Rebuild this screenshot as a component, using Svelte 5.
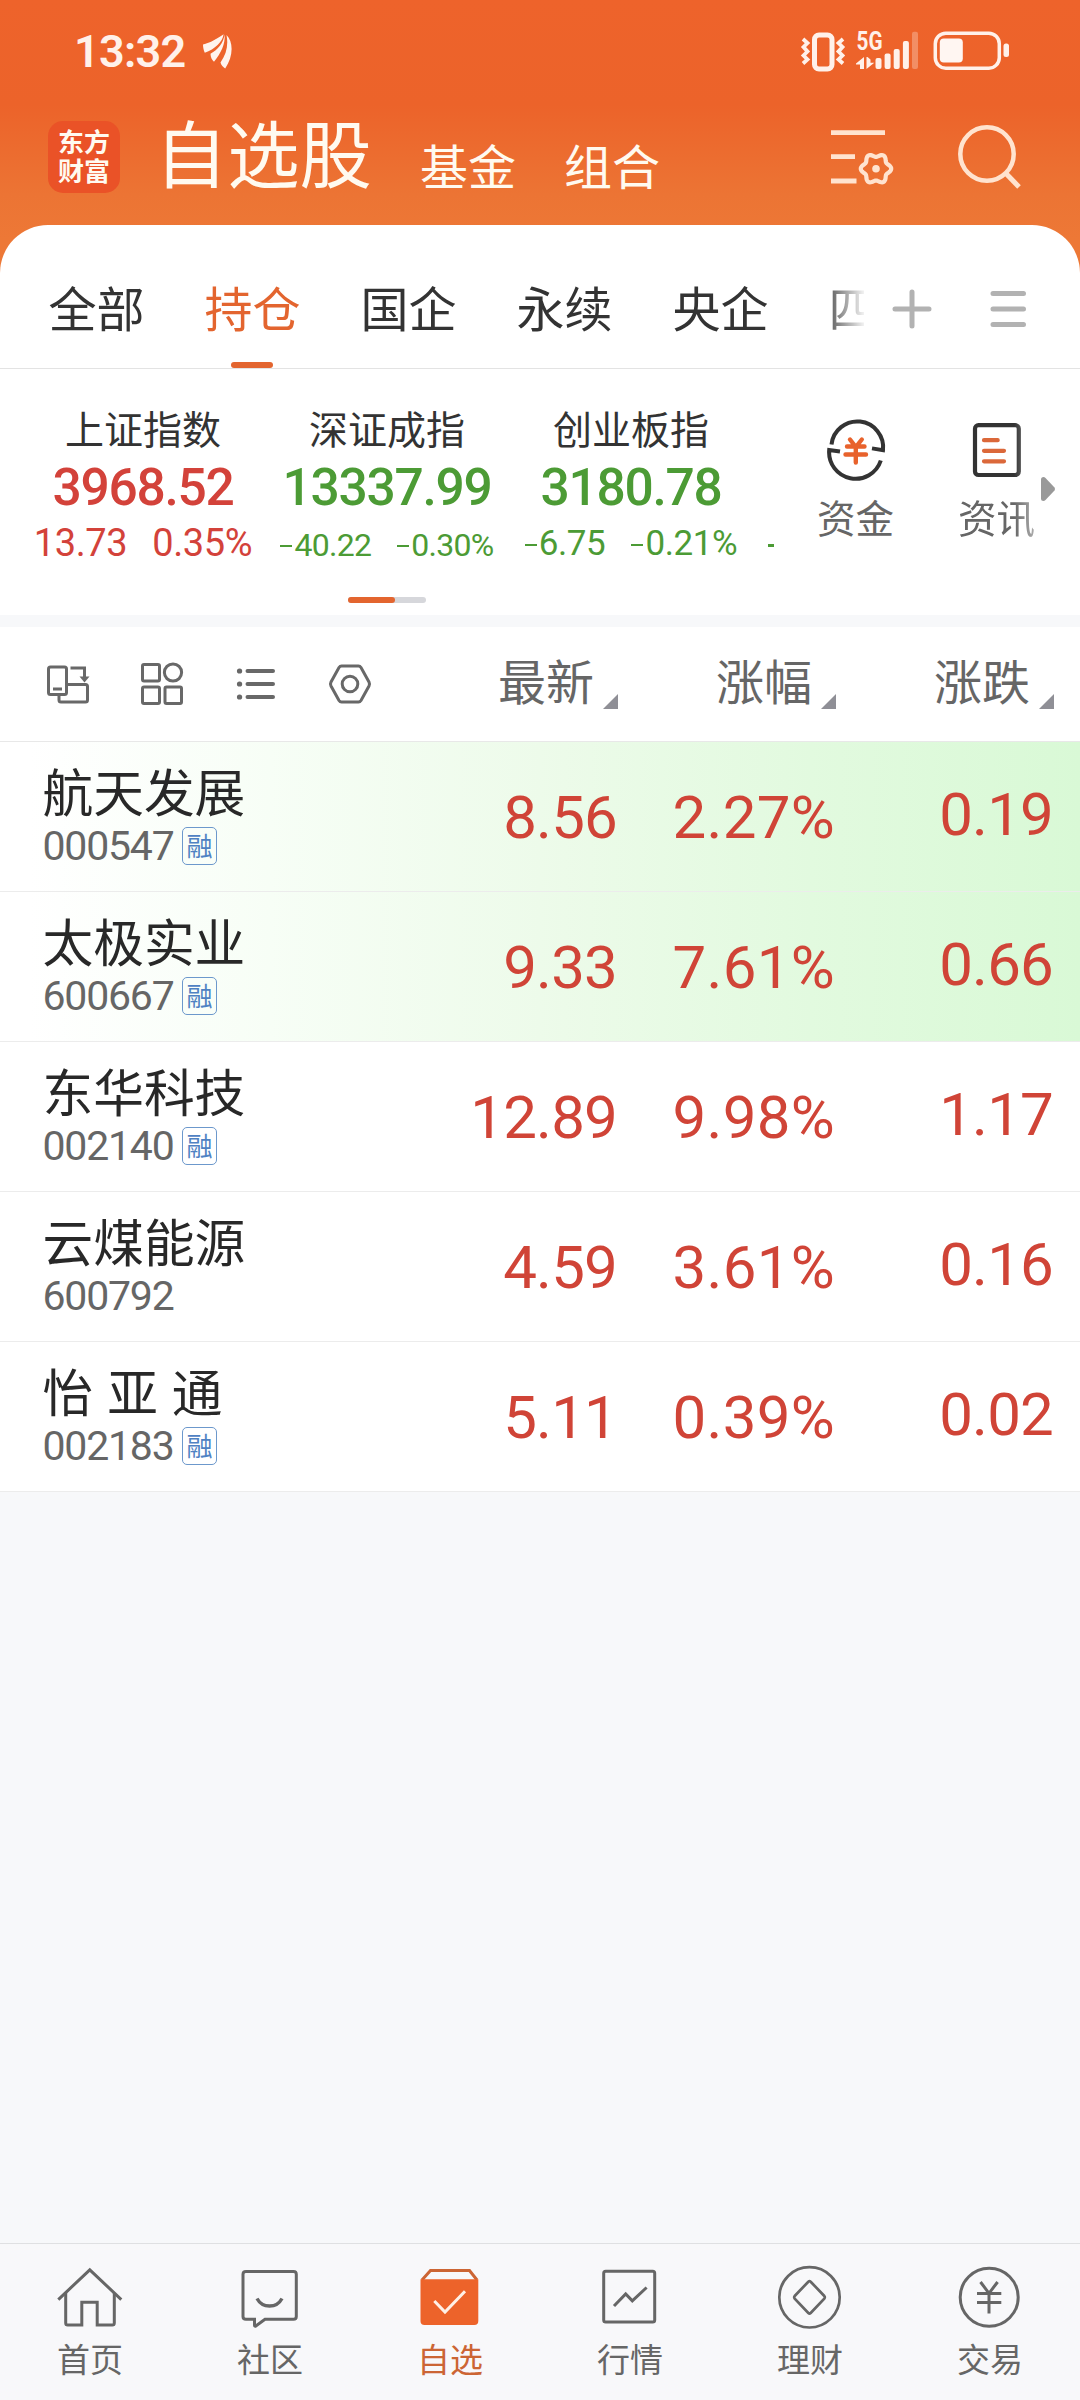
<script lang="ts">
  const tabs = ['全部', '持仓', '国企', '永续', '央企', '四'];

  const indices = [
    { name: '上证指数', value: '3968.52', diff: '13.73', pct: '0.35%', dir: 'up', size: 'l' },
    { name: '深证成指', value: '13337.99', diff: '-40.22', pct: '-0.30%', dir: 'down', size: 's' },
    { name: '创业板指', value: '3180.78', diff: '-6.75', pct: '-0.21%', dir: 'down', size: 'm' },
  ];

  const columns = ['最新', '涨幅', '涨跌'];

  const stocks = [
    { name: '航天发展', code: '000547', margin: true, price: '8.56', pct: '2.27%', diff: '0.19', tint: true },
    { name: '太极实业', code: '600667', margin: true, price: '9.33', pct: '7.61%', diff: '0.66', tint: true },
    { name: '东华科技', code: '002140', margin: true, price: '12.89', pct: '9.98%', diff: '1.17', tint: false },
    { name: '云煤能源', code: '600792', margin: false, price: '4.59', pct: '3.61%', diff: '0.16', tint: false },
    { name: '怡 亚 通', code: '002183', margin: true, price: '5.11', pct: '0.39%', diff: '0.02', tint: false },
  ];

  const nav = ['首页', '社区', '自选', '行情', '理财', '交易'];

  // Six-lobed outline of the settings gear
  const gear = Array.from({ length: 120 }, (_, k) => {
    const a = (k / 120) * Math.PI * 2;
    const r = 13.5 + 1.7 * Math.cos(6 * a);
    return `${(876 + r * Math.cos(a)).toFixed(2)},${(168.7 + r * Math.sin(a)).toFixed(2)}`;
  }).join(' ');
</script>

{#snippet signed(text: string)}
  {#if text.startsWith('-')}<i class="minus"></i>{text.slice(1)}{:else}{text}{/if}
{/snippet}

<div class="screen">
  <header class="top">
    <div class="status">
      <span class="time">13:32</span>
      <svg class="leaf" width="32" height="36" viewBox="0 0 32 36" fill="#fff4ee">
        <path d="M2 11.500C9 10 17 5 22.600 1.200C21.500 9 14 16 3.800 19.800C2.500 17 2 14 2 11.500Z" />
        <path d="M23.600 1.500C24.500 11 20 20 13 28.800C11 27 9.500 24.500 9.500 20.800C17 16.500 22.500 10 23.600 1.500Z" />
        <path d="M25.500 2C32.500 9 32.500 23 24.200 35.500C22 34 20.300 32.500 19.500 29.500C25.500 21 27.500 12 25.500 2Z" />
      </svg>
      <svg class="signals" width="212" height="44" viewBox="800 29 212 44" fill="none">
        <g stroke="#fff1ea">
          <rect x="814.500" y="35" width="17.500" height="34" rx="4.500" stroke-width="5" />
          <path d="M803 39l4.500 4-4 4 4 4.500-4 4 4 4-4.500 4M843 39l-4.500 4 4 4-4 4.500 4 4-4 4 4.500 4" stroke-width="3.800" />
        </g>
        <text x="856.500" y="50.300" textLength="26" lengthAdjust="spacingAndGlyphs" class="net">5G</text>
        <g fill="#fff1ea">
          <path d="M856 63.500L864 57V69H860V64.500H856ZM874.300 62.800L866.500 69V57H867.500L870.500 59.500V62.800Z" />
          <rect x="875.500" y="58" width="6" height="11" rx="2" />
          <rect x="884.600" y="53.600" width="6" height="15.400" rx="2" />
          <rect x="893.700" y="49" width="6" height="20" rx="2" />
          <rect x="902.900" y="41" width="6" height="28" rx="2" />
          <rect x="912" y="31.700" width="6" height="37.300" rx="2" opacity=".3" />
          <rect x="939.800" y="38.500" width="23" height="24" rx="4" fill="#fff6f2" />
          <rect x="1003.500" y="43.500" width="5.500" height="13.500" rx="2.500" />
        </g>
        <rect x="935.300" y="33.200" width="64" height="35" rx="10.500" stroke="#fff1ea" stroke-width="3.500" />
      </svg>
    </div>

    <div class="titlebar">
      <div class="logo"><span>东方</span><span>财富</span></div>
      <h1>自选股</h1>
      <span class="sub">基金</span>
      <span class="sub">组合</span>
      <svg class="actions" width="196" height="64" viewBox="828 122 196 64" fill="none" stroke="#ffe3cf" stroke-width="4.800">
        <path d="M831 132.700H885M831 156.700H855M831 181H856.500" />
        <polygon points={gear} stroke-width="4.200" />
        <circle cx="876" cy="168.700" r="3.800" fill="#ffe3cf" stroke="none" />
        <circle cx="987" cy="154" r="26.700" stroke-width="4.500" />
        <path d="M1005 172.500L1019 187" stroke-width="5" />
      </svg>
    </div>
  </header>

  <section class="sheet">
    <nav class="tabs">
      <div class="tablist">
        {#each tabs as tab, i}
          <span class="tab" class:active={i === 1}>{tab}</span>
        {/each}
      </div>
      <svg width="140" height="44" viewBox="890 286.500 140 44" fill="none" stroke="#b2b2b2" stroke-width="5" stroke-linecap="round">
        <path d="M895 308.500H929M912 291.500V325.500M993 293H1023.500M993 308.500H1023.500M993 324H1023.500" />
      </svg>
    </nav>

    <div class="market">
      <div class="indices">
        {#each indices as idx}
          <div class="index {idx.dir}">
            <span class="iname">{idx.name}</span>
            <span class="ivalue">{idx.value}</span>
            <span class="ichange {idx.size}">
              <span>{@render signed(idx.diff)}</span>
              <span>{@render signed(idx.pct)}</span>
            </span>
          </div>
        {/each}
        <i class="peek"></i>
      </div>
      <div class="shortcuts">
        <div class="shortcut">
          <svg width="64" height="64" viewBox="824 418 64 64" fill="none" stroke="#333" stroke-width="4">
            <path d="M831.500 444.500A25.500 25.500 0 0 1 883 450.200L872 448.400" />
            <path d="M880.800 460.500A26.500 26.500 0 0 1 829.200 450L840 451.600" />
            <path d="M850 439.500L855.800 447L861.800 439.500M847 446.500H864.500M845.500 454.500H866M855.800 446V462.500" stroke="#e8622c" stroke-linecap="round" stroke-width="4.400" />
          </svg>
          <span>资金</span>
        </div>
        <div class="shortcut fade">
          <svg width="64" height="64" viewBox="965 418 64 64" fill="none" stroke="#333" stroke-width="4.200">
            <rect x="975" y="425.200" width="43.800" height="49.800" rx="3.500" />
            <path d="M984 440.200H997.700M984 450.800H1004M984 461.300H1004" stroke="#db683a" stroke-linecap="round" />
          </svg>
          <span>资讯</span>
        </div>
        <svg class="more" width="16" height="26" viewBox="0 0 16 26">
          <path d="M1 3.500Q1 1 3.500 1Q4.500 1 5.500 2L14.500 11.500Q15.500 13 14.500 14.500L5.500 24Q4.500 25 3.500 25Q1 25 1 22.500Z" fill="#999" />
        </svg>
      </div>
      <div class="pager"><i></i></div>
    </div>
  </section>

  <section class="board">
    <div class="thead">
      <svg class="tools" width="330" height="46" viewBox="44 661 330 46" fill="none" stroke="#686868" stroke-width="3">
        <rect x="48.500" y="667" width="18" height="27.500" rx="2" />
        <path d="M53 689H62M59 695V700Q59 702 61 702H85.500Q87.500 702 87.500 700V686.500Q87.500 684.500 85.500 684.500H67M70.500 668H84.500V678" />
        <path d="M79.500 676.500H89.500L84.500 682.500Z" fill="#686868" stroke="none" />
        <rect x="142.500" y="664.500" width="17" height="16.500" rx="1.500" />
        <circle cx="173" cy="672.500" r="8.600" />
        <rect x="142.500" y="687" width="17" height="16.500" rx="1.500" />
        <rect x="165" y="687" width="16.500" height="16.500" rx="1.500" />
        <path d="M247.500 671H273M247.500 684H273M247.500 697H273" stroke-width="4" stroke-linecap="round" />
        <path d="M239.500 671h.1M239.500 684h.1M239.500 697h.1" stroke-width="5.200" stroke-linecap="round" />
        <path d="M341.500 666H358.500Q360 666 361 667.500L369 682Q370 684 369 686L361 700.500Q360 702 358.500 702H341.500Q340 702 339 700.500L331 686Q330 684 331 682L339 667.500Q340 666 341.500 666Z" />
        <circle cx="350" cy="684" r="7.800" />
      </svg>
      {#each columns as col}
        <span class="th">{col}<i class="sort"></i></span>
      {/each}
    </div>

    {#each stocks as s}
      <div class="row" class:tint={s.tint}>
        <div class="ident">
          <span class="sname">{s.name}</span>
          <span class="scode">{s.code}{#if s.margin}<b class="badge">融</b>{/if}</span>
        </div>
        <span class="num">{s.price}</span>
        <span class="num pct">{s.pct}</span>
        <span class="num last">{s.diff}</span>
      </div>
    {/each}
  </section>

  <div class="blank"></div>

  <nav class="bottom">
    {#each nav as label, i}
      <div class="item" class:on={i === 2}>
        <svg width="72" height="72" viewBox="0 0 72 72" fill="none" stroke="currentColor" stroke-width="3">
          {#if i === 0}
            <path d="M4.300 38.600L35.800 8.800L67.300 38.600" />
            <path d="M11.700 32V62Q11.700 64 13.700 64H27.800V41.300H43.200V64H58.300Q60.300 64 60.300 62V32" />
          {:else if i === 1}
            <path d="M12 10.500H59.500Q62.300 10.500 62.300 13.300V55.500Q62.300 58.300 59.500 58.300H31L21.500 65.300Q20.500 65.300 20.500 64V58.300H12Q9 58.300 9 55.500V13.300Q9 10.500 12 10.500Z" />
            <path d="M23 37.500Q27 45 35.600 45Q44 45 48 37.500" stroke-width="3.400" />
          {:else if i === 2}
            <path d="M8 19L16.500 9.500H55.500L63 19" stroke-width="3" />
            <path d="M6.500 18.300H64.300V60Q64.300 64 60.300 64H10.500Q6.500 64 6.500 60Z" fill="#ed632a" stroke="none" />
            <path d="M20.300 40L31 51L51 30.300" stroke="#fff0e6" stroke-width="3" />
          {:else if i === 3}
            <rect x="9.700" y="10.300" width="51" height="50.700" rx="2" />
            <path d="M20 45L31.700 33L38.300 39.800L52.600 26.500" />
          {:else if i === 4}
            <circle cx="35.500" cy="36.300" r="30.200" stroke-width="2.700" />
            <path d="M34.300 20.700Q35.500 19.700 36.700 20.700L50.300 35Q51.300 36.300 50.300 37.600L36.700 52Q35.500 53 34.300 52L20.700 37.600Q19.700 36.300 20.700 35Z" stroke-width="2.700" />
          {:else}
            <circle cx="35.200" cy="36.300" r="29" />
            <path d="M26.500 21L35 32.300L43.600 21M23 32.500H47.300M23 41.500H47.300M35 32V52.500" stroke-width="3" />
          {/if}
        </svg>
        <span>{label}</span>
      </div>
    {/each}
  </nav>
</div>

<style>
  :global(body) {
    margin: 0;
    background: #f7f8fa;
  }
  .screen {
    width: 1080px;
    height: 2400px;
    display: flex;
    flex-direction: column;
    overflow: hidden;
    background: #f7f8fa;
    font-family: 'Noto Sans CJK SC', sans-serif;
    color: #333;
  }
  svg {
    display: block;
    flex: none;
  }

  .top {
    height: 285px;
    margin-bottom: -60px;
    flex: none;
    background: linear-gradient(#ee632b 0, #ec632a 105px, #ec7434 195px, #ed7836 240px);
    color: #fffaf0;
  }
  .status {
    height: 102px;
    display: flex;
    align-items: center;
    padding: 0 68px 0 74px;
  }
  .time {
    font: 600 45px/1 Roboto, sans-serif;
    letter-spacing: -0.7px;
    color: #fff1ea;
    width: 127px;
  }
  .signals {
    margin-left: auto;
  }
  .net {
    font: 700 25px Roboto, sans-serif;
    fill: #fff1ea;
  }
  .titlebar {
    display: flex;
    padding: 0 56px 0 48px;
  }
  .logo {
    width: 72px;
    height: 72px;
    margin: 19px 35px 0 0;
    border-radius: 15px;
    background: #ea5227;
    display: flex;
    flex-direction: column;
    align-items: center;
    justify-content: center;
    font-weight: 700;
    font-size: 26px;
    line-height: 29.5px;
    padding-bottom: 4px;
    box-sizing: border-box;
  }
  h1 {
    margin: 13px 0 0;
    font-size: 72.300px;
    line-height: 72px;
    font-weight: 400;
  }
  .sub {
    margin: 38px 0 0 48px;
    font-size: 48px;
    line-height: 48px;
  }
  .actions {
    margin: 20px 0 0 auto;
    overflow: visible;
  }

  .sheet {
    background: #fff;
    border-radius: 48px 48px 0 0;
    height: 390px;
    flex: none;
    position: relative;
  }
  .tabs {
    height: 143px;
    display: flex;
    align-items: center;
    border-bottom: 1px solid #e3e3e3;
    padding: 0 50px 0 48.500px;
    justify-content: space-between;
  }
  .tabs svg {
    margin-top: 24px;
  }
  .tablist {
    width: 815px;
    height: 100%;
    display: flex;
    gap: 60px;
    overflow: hidden;
    mask-image: linear-gradient(90deg, #000 770px, transparent 818px);
  }
  .tab {
    position: relative;
    flex: none;
    font-size: 48px;
    line-height: 48px;
    padding-top: 57px;
  }
  .active {
    color: #e3652f;
  }
  .active::after {
    content: '';
    position: absolute;
    left: 26.500px;
    bottom: 0;
    width: 42px;
    height: 6px;
    border-radius: 3px;
    background: #e3652f;
  }

  .market {
    display: grid;
    grid-template-columns: 774px 1fr;
    grid-template-rows: 228px 6px;
    overflow: hidden;
  }
  .indices {
    display: flex;
    padding-left: 21px;
    overflow: hidden;
  }
  .index {
    width: 244px;
    flex: none;
    display: flex;
    flex-direction: column;
    align-items: center;
    white-space: nowrap;
  }
  .up {
    color: #d3423a;
  }
  .down {
    color: #4c9b35;
  }
  .iname {
    color: #333;
    font-size: 39px;
    line-height: 40px;
    margin-top: 38px;
  }
  .ivalue {
    font: 500 51.500px/52px Roboto, sans-serif;
    letter-spacing: -1.300px;
    margin-top: 15px;
  }
  .ichange {
    display: flex;
    font-family: Roboto, sans-serif;
    line-height: 44px;
    margin-top: 7px;
    align-items: baseline;
    height: 44px;
    gap: 26px;
    letter-spacing: -0.400px;
  }
  .ichange.l {
    font-size: 38px;
    gap: 25px;
  }
  .ichange.s {
    font-size: 32px;
    line-height: 48px;
    letter-spacing: -0.700px;
  }
  .ichange.m {
    font-size: 35px;
    line-height: 46px;
    letter-spacing: -0.400px;
  }
  .minus {
    display: inline-block;
    width: 12px;
    height: 2.500px;
    margin-right: 2px;
    vertical-align: 9px;
    background: currentColor;
  }
  .peek {
    flex: none;
    width: 12px;
    height: 3px;
    margin: 175px 0 0 15px;
    background: #4c9b35;
  }
  .shortcuts {
    display: flex;
    padding: 49px 0 0 11px;
  }
  .shortcut {
    width: 141px;
    display: flex;
    flex-direction: column;
    align-items: center;
    color: #666;
    font-size: 38.500px;
    line-height: 40px;
  }
  .shortcut span {
    margin-top: 14px;
  }
  .fade {
    mask-image: linear-gradient(90deg, #000 88px, rgba(0, 0, 0, 0.5) 110px);
  }
  .more {
    margin: 58px 0 0 -27px;
  }
  .pager {
    grid-column: 1 / -1;
    margin-left: 348px;
    width: 78px;
    border-radius: 3px;
    background: #d6d7db;
  }
  .pager i {
    display: block;
    width: 47px;
    height: 6px;
    border-radius: 3px;
    background: #e3652f;
  }

  .board {
    margin-top: 12px;
    flex: none;
  }
  .thead {
    height: 114px;
    display: flex;
    align-items: center;
    background: #fff;
    border-bottom: 1px solid #e8e8e8;
    padding-left: 44px;
  }
  .tools {
    margin-right: 26px;
  }
  .th {
    width: 218px;
    display: flex;
    justify-content: flex-end;
    align-items: flex-end;
    gap: 9px;
    font-size: 48px;
    line-height: 48px;
    color: #666;
    margin-top: -10px;
  }
  .sort {
    width: 15px;
    height: 15px;
    background: #8f8f96;
    clip-path: polygon(100% 0, 100% 100%, 0 100%);
    margin-bottom: -6px;
  }
  .row {
    height: 149px;
    display: flex;
    background: #fff;
    border-bottom: 1px solid #ececec;
  }
  .tint {
    background: linear-gradient(90deg, #fff 30px, #f7fef6 270px, #edfbea 540px, #e2fadf 810px, #d9f9d6 1080px);
  }
  .ident {
    width: 400px;
    padding-left: 42.500px;
    box-sizing: border-box;
    display: flex;
    flex-direction: column;
    white-space: pre;
  }
  .sname {
    color: #282828;
    font-size: 50.700px;
    line-height: 50px;
    word-spacing: 2.600px;
    margin-top: 23px;
  }
  .scode {
    display: flex;
    align-items: center;
    font: 400 41px/40px Roboto, sans-serif;
    letter-spacing: -1.200px;
    color: #666;
    margin-top: 11px;
  }
  .badge {
    width: 35px;
    height: 38px;
    margin-left: 8.500px;
    box-sizing: border-box;
    border: 1.500px solid #6c98cc;
    border-radius: 5px;
    font: 400 26px/33px 'Noto Sans CJK SC', sans-serif;
    letter-spacing: 0;
    text-align: center;
    color: #4f82c3;
  }
  .num {
    width: 218px;
    text-align: right;
    font: 400 60px/60px Roboto, sans-serif;
    letter-spacing: -0.800px;
    color: #d04437;
    margin-top: 46px;
    box-sizing: border-box;
    padding-right: 1px;
  }
  .pct {
    letter-spacing: 0.300px;
  }
  .last {
    margin-top: 43px;
  }

  .blank {
    flex: 1;
  }
  .bottom {
    height: 156px;
    flex: none;
    display: flex;
    border-top: 1px solid #dfe0e2;
    background: #f8f8fa;
  }
  .item {
    flex: 1;
    display: flex;
    flex-direction: column;
    align-items: center;
    padding-top: 17px;
    color: #666;
    font-size: 33px;
    line-height: 34px;
  }
  .item span {
    margin-top: 8px;
  }
  .on {
    color: #cc6534;
  }
</style>
